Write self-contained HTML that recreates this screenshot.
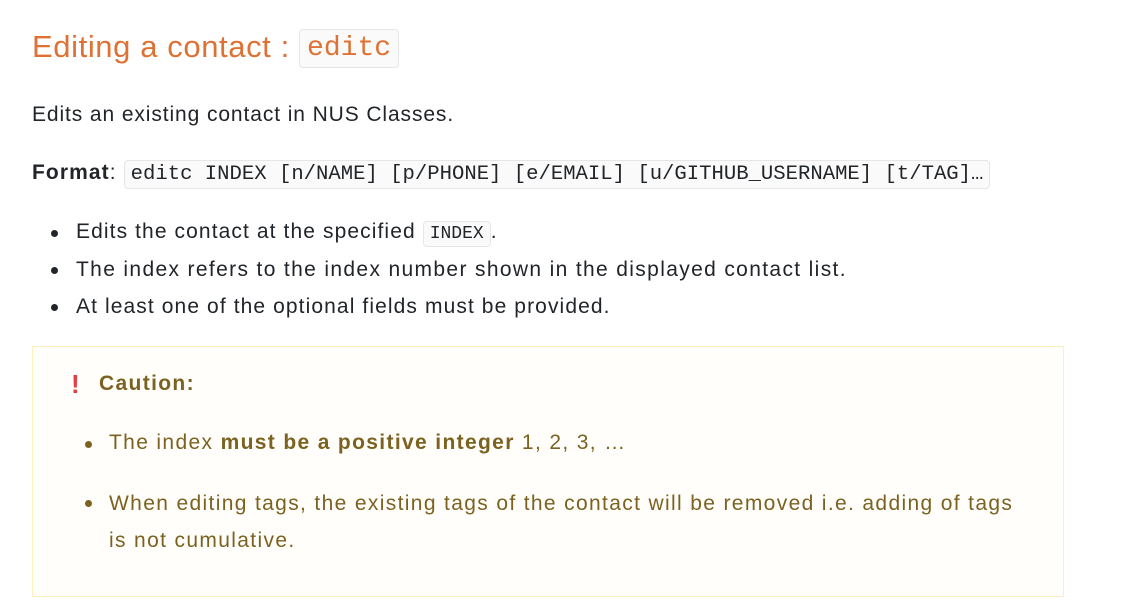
<!DOCTYPE html><html><head><style>
body{margin:0;background:#fff;font-family:"Liberation Sans",sans-serif;color:#212529;width:1124px;height:610px;overflow:hidden;position:relative}
.a{position:absolute;white-space:nowrap}
.t{font-size:21px;letter-spacing:1.1px}
code{font-family:"Liberation Mono",monospace;background:#fafafa;border:1px solid #e6e6e6;border-radius:4px;letter-spacing:0}
.b{position:absolute;width:7px;height:7px;border-radius:50%;background:#212529}
.c{color:#7c6221}
.c .b{background:#7c6221}
.c .t{letter-spacing:1.35px}
</style></head><body>
<div class="a" style="left:32px;top:29px;font-size:31px;letter-spacing:0.6px;color:#dd7234">Editing a contact : <code style="font-size:28px;color:#dd7234;padding:3px 7px;position:relative;top:-2px">editc</code></div>
<div class="a t" style="left:32px;top:103px;letter-spacing:0.9px">Edits an existing contact in NUS Classes.</div>
<div class="a t" style="left:32px;top:161px"><b>Format</b>: <code style="font-size:20.6px;padding:2px 6px">editc INDEX [n/NAME] [p/PHONE] [e/EMAIL] [u/GITHUB_USERNAME] [t/TAG]…</code></div>
<div class="b" style="left:51px;top:230px"></div>
<div class="a t" style="left:76px;top:220px">Edits the contact at the specified <code style="font-size:18px;padding:2px 6px">INDEX</code>.</div>
<div class="b" style="left:51px;top:267px"></div>
<div class="a t" style="left:76px;top:258px;letter-spacing:1.35px">The index refers to the index number shown in the displayed contact list.</div>
<div class="b" style="left:51px;top:304px"></div>
<div class="a t" style="left:76px;top:295px">At least one of the optional fields must be provided.</div>
<div style="position:absolute;left:32px;top:346px;width:1030px;height:249px;border:1px solid #fcefc0;background:#fffefa" class="c">
<div class="a" style="left:38px;top:22px;font-size:26px;color:#e24040;font-weight:bold">!</div>
<div class="a t" style="left:66px;top:25px;font-weight:bold">Caution:</div>
<div class="b" style="left:52px;top:94px"></div>
<div class="a t" style="left:76px;top:84px">The index <b>must be a positive integer</b> 1, 2, 3, …</div>
<div class="b" style="left:52px;top:153px"></div>
<div class="a t" style="left:76px;top:138px;line-height:37px">When editing tags, the existing tags of the contact will be removed i.e. adding of tags<br>is not cumulative.</div>
</div>
</body></html>
